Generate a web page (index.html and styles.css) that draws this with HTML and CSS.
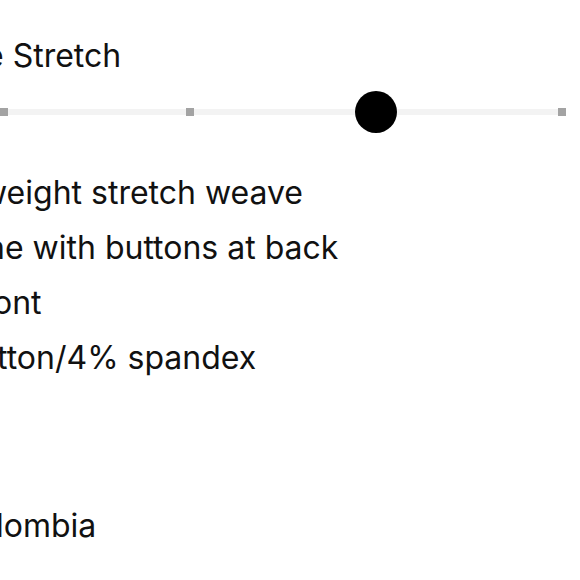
FILE: index.html
```html
<!DOCTYPE html>
<html lang="en">
<head>
<meta charset="utf-8">
<link rel="stylesheet" href="styles.css">
</head>
<body>
<main class="details">
  <section class="stretch">
    <h3 class="stretch-label"><span class="cut-label">e</span> Stretch</h3>
    <div class="scale">
      <div class="track">
        <span class="tick"></span>
        <span class="tick"></span>
        <span class="tick"></span>
        <span class="tick"></span>
        <span class="tick"></span>
        <span class="knob"></span>
      </div>
    </div>
  </section>
  <ul class="features">
    <li class="cut-1">weight stretch weave</li>
    <li class="cut-2">ne with buttons at back</li>
    <li class="cut-3">ont</li>
    <li class="cut-4">tton/4% spandex</li>
  </ul>
  <p class="origin">lombia</p>
</main>
</body>
</html>
```
FILE: styles.css
```css
html, body {
  margin: 0;
  padding: 0;
  background: #fff;
}
body {
  width: 580px;
  height: 580px;
  overflow: hidden;
  font-family: Inter, "Noto Sans", sans-serif;
  color: #111;
}
.details {
  display: flex;
  flex-direction: column;
}
.stretch {
  padding-top: 36px;
}
.stretch-label {
  margin: 0;
  font-size: 32px;
  font-weight: 400;
  line-height: 40px;
}
.cut-label { margin-left: -15px; }
.scale {
  margin-top: 33px;
  margin-left: -186px;
}
.track {
  position: relative;
  width: 752px;
  height: 6px;
  background: #f3f3f3;
  display: flex;
  justify-content: space-between;
  align-items: center;
}
.tick {
  width: 8px;
  height: 8px;
  background: #a3a3a3;
}
.knob {
  position: absolute;
  left: 541px;
  top: -18px;
  width: 42px;
  height: 42px;
  border-radius: 50%;
  background: #000;
}
.features {
  list-style: none;
  margin: 50px 0 0;
  padding: 0;
  font-size: 32px;
  line-height: 55px;
}
.cut-1 { margin-left: -19px; }
.cut-2 { margin-left: -14px; }
.cut-3 { margin-left: -7px; }
.cut-4 { margin-left: -3px; }
.origin {
  margin: 113px 0 0 -4px;
  font-size: 32px;
  line-height: 55px;
}
```
